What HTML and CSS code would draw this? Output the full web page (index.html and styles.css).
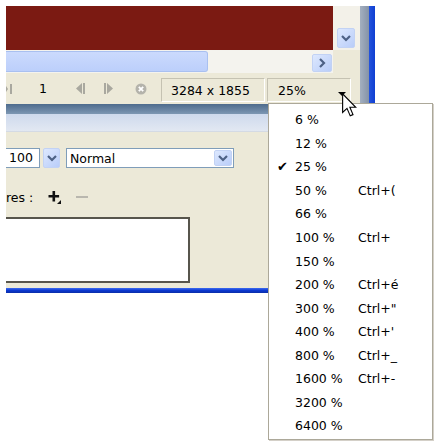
FILE: index.html
```html
<!DOCTYPE html>
<html lang="fr">
<head>
    <meta charset="UTF-8">
    <title>Zoom</title>
    <link rel="stylesheet" href="styles.css">
</head>
<body>
    <div id="win">
        <div id="win-body">
            <div id="content">
                <div class="view-row">
                    <div id="canvas"></div>
                    <div id="vscroll">
                        <button class="sbtn down">
                            <svg width="10" height="8" viewBox="0 0 10 8"><path d="M1 2 L5 6 L9 2" fill="none" stroke="#4d6185" stroke-width="2.2"/></svg>
                        </button>
                    </div>
                </div>
                <div class="view-row" id="hrow">
                    <div id="hscroll">
                        <div id="thumb"></div>
                        <button class="sbtn right">
                            <svg width="8" height="10" viewBox="0 0 8 10"><path d="M2 1 L6 5 L2 9" fill="none" stroke="#4d6185" stroke-width="2.2"/></svg>
                        </button>
                    </div>
                    <div id="corner"></div>
                </div>
                <div id="status">
                    <svg class="nav" width="7" height="10" viewBox="0 0 7 10"><path d="M0 2 L2 5 L0 8 Z" fill="#a9a89f"/><rect x="4" y="0" width="2" height="10" fill="#a9a89f"/></svg>
                    <span id="frame">1</span>
                    <svg class="nav prev" width="11" height="11" viewBox="0 0 11 11"><path d="M7 0 L7 11 L1 5.5 Z" fill="#a9a89f"/><rect x="8" y="0" width="2" height="11" fill="#a9a89f"/></svg>
                    <svg class="nav next" width="11" height="11" viewBox="0 0 11 11"><rect x="1" y="0" width="2" height="11" fill="#a9a89f"/><path d="M4 0 L4 11 L10 5.5 Z" fill="#a9a89f"/></svg>
                    <svg class="nav stop" width="12" height="12" viewBox="0 0 12 12"><circle cx="6" cy="6" r="5.5" fill="#b4b3ab"/><path d="M3.8 3.8 L8.2 8.2 M8.2 3.8 L3.8 8.2" stroke="#fff" stroke-width="1.8"/></svg>
                    <div class="field size">3284 x 1855</div>
                    <div class="field zoom">25%<span class="caret"></span></div>
                </div>
                <div id="panel-head"></div>
                <div id="panel">
                    <div class="prow">
                        <div class="num">100</div>
                        <button class="sbtn drop">
                            <svg width="10" height="8" viewBox="0 0 10 8"><path d="M1 2 L5 6 L9 2" fill="none" stroke="#4d6185" stroke-width="2.2"/></svg>
                        </button>
                        <div class="select">
                            <span>Normal</span>
                            <button class="sbtn drop inner">
                                <svg width="10" height="8" viewBox="0 0 10 8"><path d="M1 2 L5 6 L9 2" fill="none" stroke="#4d6185" stroke-width="2.2"/></svg>
                            </button>
                        </div>
                    </div>
                    <div class="prow filters">
                        <span class="lbl">res :</span>
                        <svg class="add" width="13" height="13" viewBox="0 0 13 13"><path d="M4.5 0 h2.6 v4 h4 v2.6 h-4 v4 h-2.6 v-4 h-4 v-2.6 h4 Z" fill="#111"/><path d="M13 9 L13 13 L9 13 Z" fill="#111"/></svg>
                        <span class="minus"></span>
                    </div>
                    <div class="list"></div>
                </div>
            </div>
            <div id="edge"></div>
        </div>
        <div id="bottom-edge"></div>
    </div>

    <ul id="zoom-menu">
        <li>6 %</li>
        <li>12 %</li>
        <li class="checked">25 %</li>
        <li>50 %<kbd>Ctrl+(</kbd></li>
        <li>66 %</li>
        <li>100 %<kbd>Ctrl+</kbd></li>
        <li>150 %</li>
        <li>200 %<kbd>Ctrl+é</kbd></li>
        <li>300 %<kbd>Ctrl+"</kbd></li>
        <li>400 %<kbd>Ctrl+'</kbd></li>
        <li>800 %<kbd>Ctrl+_</kbd></li>
        <li>1600 %<kbd>Ctrl+-</kbd></li>
        <li>3200 %</li>
        <li>6400 %</li>
    </ul>

    <svg id="pointer" width="15" height="24" viewBox="0 0 12 19"><path d="M0.5 0.5 L0.5 15.5 L4 12.2 L6.6 18.2 L8.8 17.2 L6.3 11.3 L11 11.3 Z" fill="#fff" stroke="#000" stroke-width="0.9" stroke-linejoin="miter"/></svg>
</body>
</html>
```

FILE: styles.css
```css
:root{
    --face: #ece9d8;
    --field-border: #7f9db9;
    --xp-blue: #1646d8;
}
*{
    margin: 0;
    padding: 0;
    box-sizing: border-box;
}
body{
    background: #fff;
    font-family: "DejaVu Sans", Verdana, sans-serif;
    font-size: 12.5px;
    color: #000;
    width: 437px;
    height: 446px;
    overflow: hidden;
}
#win{
    margin: 6px 0 0 6px;
    width: 370px;
    display: flex;
    flex-direction: column;
}
#win-body{
    display: flex;
}
#content{
    width: 354px;
    display: flex;
    flex-direction: column;
}
.view-row{
    display: flex;
}
#canvas{
    width: 327px;
    height: 44px;
    background: #7b1a12;
}
#vscroll{
    width: 27px;
    height: 44px;
    background: #f3f1e9;
    display: flex;
    align-items: flex-end;
    padding: 0 0 2px 4px;
}
.sbtn{
    display: flex;
    align-items: center;
    justify-content: center;
    border: 1px solid #c2d2f4;
    border-radius: 2px;
    background: linear-gradient(135deg, #dde8fe, #b9cdf9);
}
.sbtn.down{
    width: 18px;
    height: 20px;
}
#hrow{
    height: 23px;
}
#hscroll{
    width: 327px;
    background: #f4f3ee;
    display: flex;
    align-items: center;
    justify-content: space-between;
    padding-right: 1px;
}
#thumb{
    width: 202px;
    height: 21px;
    border: 1px solid #a9c0f0;
    border-left: none;
    border-radius: 0 3px 3px 0;
    background: linear-gradient(#cbdafd, #bccffb);
}
.sbtn.right{
    width: 20px;
    height: 18px;
    margin-top: 3px;
}
#corner{
    width: 27px;
    background: var(--face);
}
#status{
    height: 31px;
    background: var(--face);
    display: flex;
    align-items: center;
}
.nav{
    flex: none;
}
#frame{
    margin-left: 25px;
    width: 10px;
    text-align: center;
}
.nav.prev{
    margin-left: 27px;
}
.nav.next{
    margin-left: 17px;
}
.nav.stop{
    margin-left: 21px;
}
.field{
    height: 24px;
    display: flex;
    align-items: center;
    border: 1px solid;
    border-color: #c5c2b2 #fff #fff #c5c2b2;
    margin-top: 3px;
}
.field.size{
    margin-left: 14px;
    width: 104px;
    padding-left: 9px;
}
.field.zoom{
    margin-left: 2px;
    width: 84px;
    padding-left: 10px;
    position: relative;
}
.caret{
    position: absolute;
    left: 70px;
    top: 13px;
    border: 4px solid transparent;
    border-top: 4px solid #000;
    border-bottom: none;
}
#panel-head{
    height: 28px;
    background:
        linear-gradient(#4e6b8d, #7d97b3) top / 100% 10px no-repeat,
        linear-gradient(#c2d1ea, #e2e8f2);
    border-bottom: 1px solid #d4dae4;
}
#panel{
    height: 156px;
    background: var(--face);
    padding-top: 16px;
}
.prow{
    display: flex;
    align-items: center;
    height: 20px;
}
.num{
    width: 34px;
    height: 20px;
    background: #fff;
    border: 1px solid var(--field-border);
    border-left: none;
    padding-left: 3px;
    line-height: 18px;
}
.sbtn.drop{
    width: 17px;
    height: 20px;
    margin-left: 3px;
}
.select{
    margin-left: 6px;
    width: 168px;
    height: 20px;
    background: #fff;
    border: 1px solid var(--field-border);
    display: flex;
    align-items: center;
    justify-content: space-between;
    padding: 0 1px 0 3px;
}
.sbtn.drop.inner{
    height: 16px;
    width: 18px;
}
.prow.filters{
    margin-top: 19px;
}
.lbl{
    width: 42px;
}
.minus{
    width: 12px;
    height: 2px;
    background: #b9b7ae;
    margin-left: 15px;
}
.list{
    margin-top: 10px;
    width: 184px;
    height: 66px;
    background: #fff;
    border: 2px solid #57554c;
    border-left: none;
}
#edge{
    width: 16px;
    background: linear-gradient(90deg, #a4b0c0, #8593a8 55%, #2453dc 56%, #0f3fd2 94%, #fff 95%);
}
#bottom-edge{
    height: 5px;
    background: linear-gradient(#3f6cf0, #0b38d0 50%, #0a2ea8);
}

/* zoom dropdown */
#zoom-menu{
    position: absolute;
    left: 268px;
    top: 103px;
    width: 165px;
    height: 337px;
    list-style: none;
    background: #fff;
    border: 1px solid #aca899;
    padding: 4px 0 0 26px;
    box-shadow: 1px 1px 0 #d4d0c8;
}
#zoom-menu li{
    height: 23.55px;
    display: flex;
    align-items: center;
    position: relative;
}
#zoom-menu li.checked::before{
    content: "✔";
    position: absolute;
    left: -18px;
    font-size: 13px;
}
#zoom-menu kbd{
    font-family: inherit;
    position: absolute;
    left: 63px;
}
#pointer{
    position: absolute;
    left: 342px;
    top: 93px;
}
```
